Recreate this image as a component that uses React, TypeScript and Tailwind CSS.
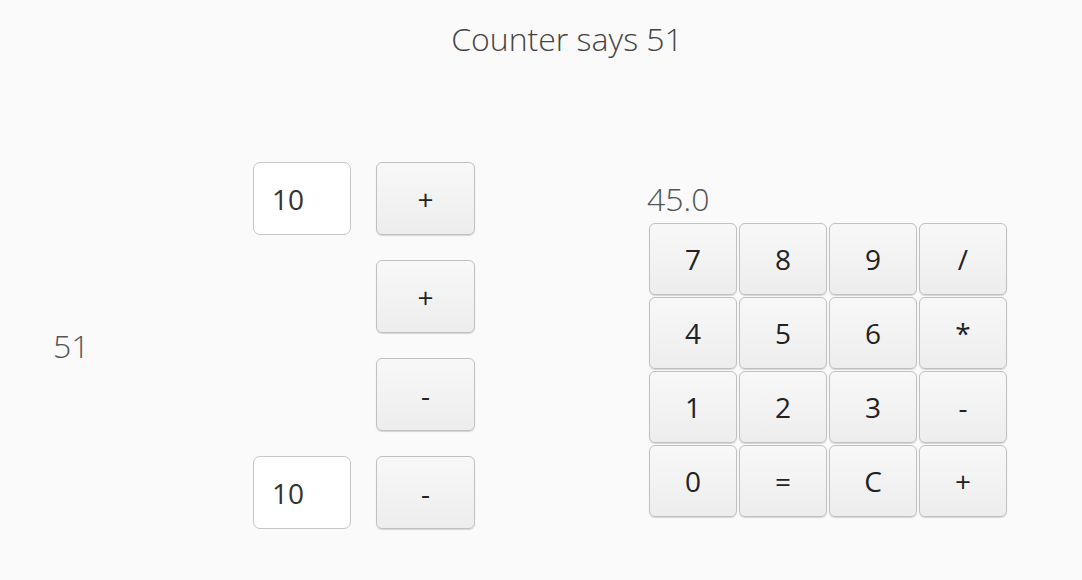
import React, { useState } from 'react';

const btn =
  'flex items-center justify-center rounded-[6px] border border-[#c0c0c0] bg-gradient-to-b from-[#f8f8f8] to-[#ededed] shadow-[0_1px_1px_rgba(0,0,0,0.15)] text-[28px] text-[#222] leading-none';

const field =
  'h-[73px] w-[98px] rounded-[7px] border-[1.5px] border-[#c6c6c6] bg-white px-[18px] text-[28px] text-[#333] outline-none';

const keys = ['7', '8', '9', '/', '4', '5', '6', '*', '1', '2', '3', '-', '0', '=', 'C', '+'];

const App: React.FC = () => {
  const [count] = useState(51);
  const [display] = useState('45.0');

  return (
    <div className="w-full h-[580px] bg-[#fafafa] font-['Open_Sans',sans-serif] overflow-hidden">
      {/* Header */}
      <h1 className="pt-[18px] pl-[52px] text-center text-[32px] font-light text-[#444] leading-[42px]">
        Counter says {count}
      </h1>

      {/* Main row */}
      <div className="flex items-start mt-[102px]">
        <div className="w-[253px] self-center pl-[53px] text-[32px] font-light text-[#555] leading-none">
          {count}
        </div>

        {/* Counter controls */}
        <div className="grid grid-cols-[98px_99px] gap-x-[25px] gap-y-[25px]">
          <input defaultValue="10" className={field} />
          <button className={`${btn} h-[73px]`}>+</button>
          <div />
          <button className={`${btn} h-[73px]`}>+</button>
          <div />
          <button className={`${btn} h-[73px]`}>-</button>
          <input defaultValue="10" className={field} />
          <button className={`${btn} h-[73px]`}>-</button>
        </div>

        {/* Calculator */}
        <div className="ml-[172px] mt-[16px]">
          <div className="text-[32px] font-light text-[#555] leading-[42px] mb-[3px]">{display}</div>
          <div className="ml-[2px] grid grid-cols-[repeat(4,88px)] gap-[2px]">
            {keys.map(k => (
              <button key={k} className={`${btn} h-[72px]`}>
                {k}
              </button>
            ))}
          </div>
        </div>
      </div>
    </div>
  );
};

export default App;
